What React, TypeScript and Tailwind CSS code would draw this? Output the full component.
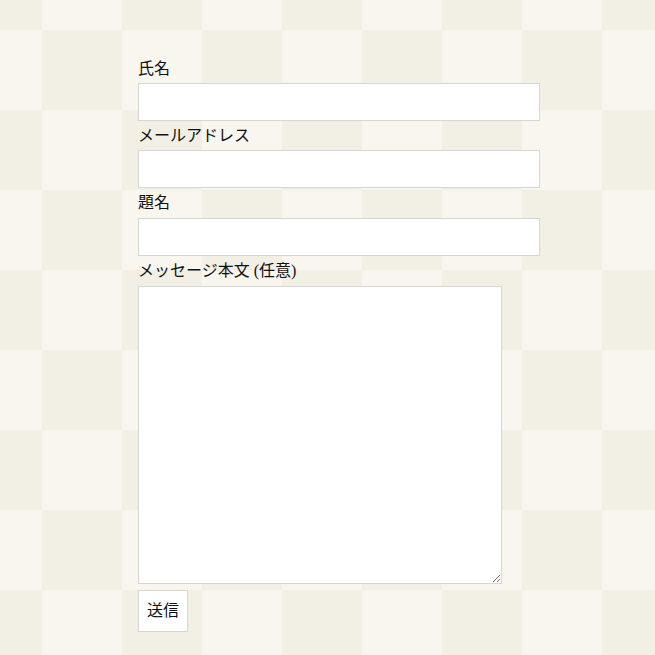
export default function App() {
  const fields = [
    { label: "氏名", h: "h-[29px] leading-[29px]" },
    { label: "メールアドレス", h: "h-[29px] leading-[29px]" },
    { label: "題名", h: "h-[30px] leading-[30px]" },
  ];

  return (
    <div
      className="min-h-[655px] w-full bg-[#f8f6ee] pt-[54px] pl-[138px] text-[#111]"
      style={{
        backgroundImage: "repeating-conic-gradient(#f2efe5 0 25%, #f8f6ee 0 50%)",
        backgroundSize: "160px 160px",
        backgroundPosition: "42px -50px",
        fontFamily: '"Liberation Serif", "Noto Sans CJK JP", serif',
      }}
    >
      <form className="flex flex-col">
        {fields.map((f) => (
          <div key={f.label} className="flex flex-col">
            <label className={`${f.h} text-[16px]`}>{f.label}</label>
            <input
              type="text"
              className="h-[38px] w-[402px] border border-[#d6d6d6] bg-white outline-none"
            />
          </div>
        ))}
        <label className="h-[30px] text-[16px] leading-[30px]">メッセージ本文 (任意)</label>
        <textarea className="h-[298px] w-[364px] border border-[#d6d6d6] bg-white outline-none" />
        <div className="mt-[6px]">
          <button
            type="button"
            className="h-[42px] w-[50px] border border-[#d6d6d6] bg-white text-[16px]"
          >
            送信
          </button>
        </div>
      </form>
    </div>
  );
}
